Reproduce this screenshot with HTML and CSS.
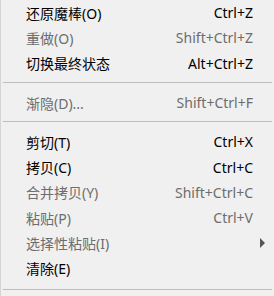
FILE: index.html
```html
<!DOCTYPE html>
<html lang="zh-CN">
<head>
    <meta charset="UTF-8">
    <title>编辑菜单</title>
    <link rel="stylesheet" href="styles.css">
</head>
<body>
    <div class="menu">
        <div class="item"><span class="label">还原魔棒(O)</span><span class="key">Ctrl+Z</span></div>
        <div class="item disabled"><span class="label">重做(O)</span><span class="key">Shift+Ctrl+Z</span></div>
        <div class="item"><span class="label">切换最终状态</span><span class="key">Alt+Ctrl+Z</span></div>
        <div class="sep"></div>
        <div class="item disabled"><span class="label">渐隐(D)...</span><span class="key">Shift+Ctrl+F</span></div>
        <div class="sep"></div>
        <div class="item"><span class="label">剪切(T)</span><span class="key">Ctrl+X</span></div>
        <div class="item"><span class="label">拷贝(C)</span><span class="key">Ctrl+C</span></div>
        <div class="item disabled"><span class="label">合并拷贝(Y)</span><span class="key">Shift+Ctrl+C</span></div>
        <div class="item disabled"><span class="label">粘贴(P)</span><span class="key">Ctrl+V</span></div>
        <div class="item disabled"><span class="label">选择性粘贴(I)</span><span class="key"></span><span class="arrow"></span></div>
        <div class="item"><span class="label">清除(E)</span><span class="key"></span></div>
        <div class="sep last"></div>
    </div>
</body>
</html>
```

FILE: styles.css
```css
body {
    margin: 0;
    background-color: #f0f0f0;
    font-family: "Noto Sans", "Noto Sans CJK SC", sans-serif;
}
.menu {
    width: 274px;
    height: 296px;
    box-sizing: border-box;
    border-left: 1px solid #d4d4d4;
    padding: 0 0 0 2px;
    overflow: hidden;
}
.item {
    height: 25.3px;
    display: flex;
    align-items: center;
    padding-left: 23px;
    font-size: 14px;
    color: #000;
}
.item.disabled {
    color: #6d6d6d;
}
.label {
    flex: 1;
}
.key {
    width: 130px;
    text-align: right;
    margin-right: 21px;
}
.arrow {
    width: 0;
    height: 0;
    border-top: 5px solid transparent;
    border-bottom: 5px solid transparent;
    border-left: 5px solid #555;
    margin-left: -14px;
    margin-right: 9px;
}
.sep {
    height: 1px;
    background-color: #bdbdbd;
    margin: 6px 2px 7px 0;
}
.sep.last {
    margin-top: 8px;
}
```
